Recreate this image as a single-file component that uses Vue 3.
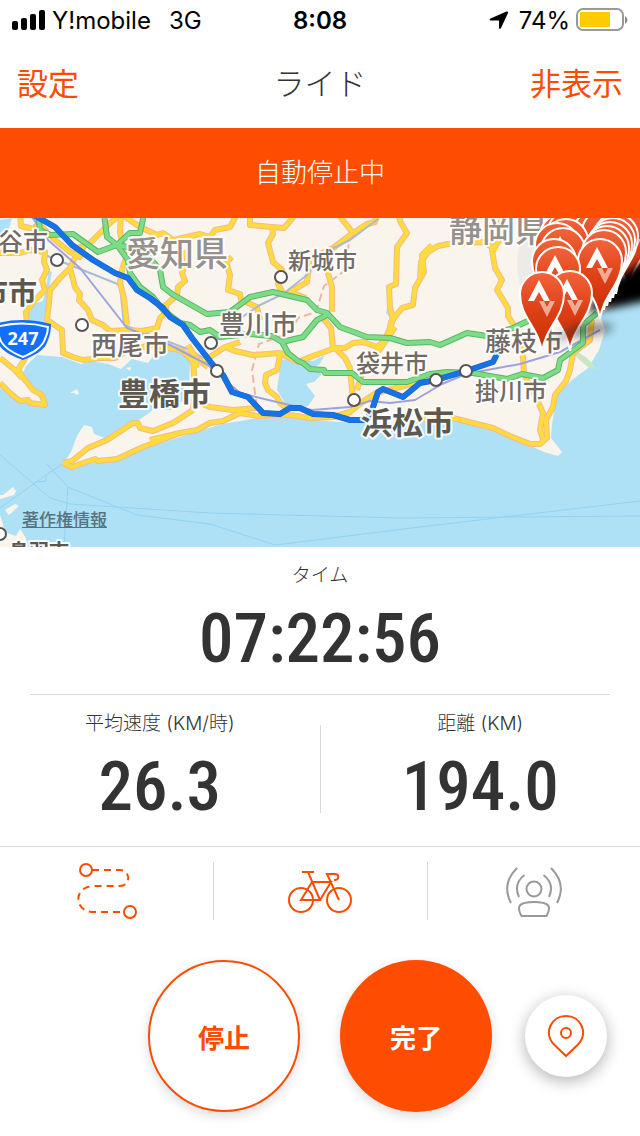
<script setup>
/**
 * ライド記録画面
 * 地図、走行データ、操作ボタンを表示
 */

// 高速道路（緑）
const highways = [
  '38,214 40,230 50,235 73,234 98,252 117,245 130,233 140,233 144,214',
  '104,214 107,237 117,245 128,260 130,273 140,287 153,297 163,310 180,323 190,325 200,332 210,330 220,337 250,334 272,336 282,342 288,353 298,361 303,363 310,369 324,370 325,373 352,373 363,382 407,382 430,374 447,372 473,373 507,379 522,374 543,378 558,370 560,360 583,343 583,325 597,313',
  '117,245 143,250 160,270 163,287 172,294 207,314 230,312 250,297 273,292 307,300 317,310 327,313 340,327 367,337 390,338 407,343 430,342 440,345 467,333 487,336 513,328 530,320 560,318',
  '327,315 317,320 303,337 282,342'
]

// 国道・県道（黄）
const roads = [
  '121,214 110,223 100,233 90,243 80,247 70,268 60,278 50,290 49,303 47,320 62,330 63,353 73,357 83,360 100,358 115,358 125,352 150,345 180,350 193,358 197,368',
  '121,214 120,232 122,243 126,258 122,270 120,283 124,298 127,325',
  '70,268 75,287 80,294 79,300 88,310 92,320 103,325 110,331 127,330 142,331 157,328 160,318 167,312 165,306 177,295 178,287 185,281 182,273 187,262 185,250',
  '0,253 20,253 30,250 45,252 44,262 47,270 42,280 45,290 35,300 26,312 27,325',
  '40,225 55,240 70,252 80,257 84,245',
  '121,214 140,227 157,235 163,233 173,240 200,234 210,237 215,230 230,227 237,214',
  '20,214 21,226 34,229 40,222',
  '27,355 18,370 25,380 33,390 42,395 45,405 30,403 28,400 20,401 10,393 0,383',
  '22,378 15,370 0,358',
  '185,353 193,362 195,385 193,410',
  '188,345 196,358 208,367',
  '240,342 225,347 210,357 195,363',
  '250,214 250,225 272,227 273,234 268,243 273,262 282,270 278,284 283,293',
  '272,227 284,228 296,214',
  '232,257 226,262 230,275 228,290 240,294 241,300 257,307 260,320',
  '338,214 353,233 333,248 310,259 307,282 290,292 306,298',
  '353,233 367,224 375,222 377,214',
  '327,270 332,287 332,312',
  '398,214 401,223 407,233 397,247 396,284 389,287 390,307 393,320 387,335 380,347',
  '432,245 422,255 424,272 415,288 413,305 402,308 391,322 388,338 377,347 363,342 353,343 345,348 333,348 331,328 322,317',
  '335,348 345,358 350,368 352,390 354,400',
  '225,347 235,351 253,355 280,353 298,362 310,357 335,348',
  '280,355 277,370 266,375 265,383 268,390 277,397 280,403 287,408',
  '395,327 380,349 364,367 357,390',
  '420,277 421,262 428,252 438,246 448,244 483,242 497,250',
  '501,214 500,240 492,250 495,268 502,280 497,290 508,308 508,316 517,330 523,357 524,374 530,386 537,400 543,413 540,430 543,440',
  '592,320 590,340 573,353 570,370 566,381 555,395 553,407 546,420 547,438 540,444 530,444 510,436 493,428 453,418 420,419',
  '150,440 180,433 197,430 210,423 223,421 240,413 257,416 290,415 310,418 333,417 350,412 365,400 376,393 400,387 425,380',
  '200,403 210,407 233,410 257,408',
  '63,463 72,461 88,448 107,440 133,423 138,423 140,428 153,431 173,423 193,410',
  '63,463 72,467 95,459 98,461 117,459 143,447 180,433'
]

const coastlines = [
  // 本州
  'M0 218H640V285L600 315L605 330L599 350L588 368L572 380L557 394L552 424L551 438L562 452L558 456L544 452L529 445L492 430L452 419L390 424L340 422L290 418L252 419L222 424L196 432L145 448L118 461L96 462L72 468L63 464L71 452L77 436L84 425L92 427L94 434L105 438L132 424L145 416L153 410L171 410L178 404L189 397L190 358L181 350L158 350L148 363L132 359L121 369L108 364L92 361L81 364L62 357L37 355L26 366L22 375L35 391L43 404L28 402L0 388Z',
  // 渥美湾の島
  'M70 393l7-4 2 5-3 1-1-2Z',
  'M126 368l5-1-1 4Z',
  // 志摩の島
  'M3 495l10-8 3 4-2 4-14 4v-4Z',
  'M5 510l10-6 4 2-10 9Z',
  'M0 515l3 9 1 8 12 4 4-7 6 9 2 12H0Z'
]

const waters = [
  'M45 248l3 22 4 2-4 22 0 22-10 15-5-4-6-8 4-14 12-4 3-12 2-14Z',
  'M281 360l14-2 18 3 12-6-6 10-8 3 11 6-8 8-8 2 9 12-7 10-11 3-11-4-9-15Z',
  'M389 300l-3 13 5 6 2-9Z',
  'M0 220l12-2-4 14-8 3Z'
]

const ferryLines = [
  '0,455 50,498 70,504 210,513 400,518 640,516',
  '47,464 68,487 137,515 210,524 275,545 420,527 640,501',
  '0,508 35,483 62,464',
  '68,487 64,545',
  '35,482 46,481 46,474'
]

const rideRoute = '32,214 55,227 72,245 93,260 115,273 128,278 137,290 150,298 163,308 170,317 183,325 192,338 213,365 223,375 232,392 248,397 263,413 280,414 290,408 300,408 313,414 333,415 350,420 367,420 373,407 378,392 383,389 403,397 408,393 420,383 436,380 466,371 493,362 500,348'

const stations = [
  [57, 260], [82, 325], [281, 277], [211, 343],
  [217, 371], [354, 400], [436, 380], [466, 371], [0, 534]
]

const labels = [
  { text: '谷市', x: -2, y: 251, size: 25 },
  { text: '市市', x: -21, y: 304, size: 29, kind: 'city' },
  { text: '愛知県', x: 126, y: 266, size: 34, kind: 'pref' },
  { text: '静岡県', x: 449, y: 242, size: 33, kind: 'pref' },
  { text: '新城市', x: 288, y: 269, size: 23 },
  { text: '豊川市', x: 219, y: 334, size: 26 },
  { text: '西尾市', x: 91, y: 355, size: 26 },
  { text: '豊橋市', x: 118, y: 405, size: 31, kind: 'city' },
  { text: '袋井市', x: 356, y: 372, size: 24 },
  { text: '藤枝市', x: 485, y: 351, size: 26 },
  { text: '掛川市', x: 475, y: 400, size: 24 },
  { text: '浜松市', x: 361, y: 434, size: 31, kind: 'city' },
  { text: '鳥羽市', x: 9, y: 559, size: 20, kind: 'city' }
]

// 影より奥にあるピン
const backPins = [[655, 226], [638, 232], [628, 232]]

// 奥から手前の順に描画
const pins = [
  [562, 236], [570, 232], [580, 235], [594, 234], [604, 232],
  [566, 241], [557, 245], [563, 250], [616, 236], [613, 240], [610, 244],
  [607, 248], [604, 252], [554, 261], [600, 261], [558, 269], [570, 293], [542, 294]
]
</script>

<template>
  <div class="screen">
    <div class="status-bar">
      <div class="carrier">
        <svg class="signal" width="34" height="20" viewBox="0 0 34 20">
          <rect x="0" y="11" width="6" height="9" rx="2" />
          <rect x="9" y="8" width="6" height="12" rx="2" />
          <rect x="18" y="4" width="6" height="16" rx="2" />
          <rect x="27" y="0" width="6" height="20" rx="2" />
        </svg>
        <span>Y!mobile</span>
        <span class="network">3G</span>
      </div>
      <span class="clock">8:08</span>
      <div class="power">
        <svg width="20" height="20" viewBox="0 0 20 20">
          <path d="M1.500 8.500L17.500 1.500Q19.500 1 19 3L12 18Q10.500 20 10 17.500V10.500H2Q-0.500 10 1.500 8.500Z" />
        </svg>
        <span class="percent">74%</span>
        <svg width="52" height="24" viewBox="0 0 52 24">
          <rect x="1" y="1" width="46" height="21" rx="6" fill="none" stroke="#999" stroke-width="2" />
          <rect x="4" y="4" width="30" height="15" fill="#fc0" />
          <path d="M49 8q5 4 0 8Z" fill="#888" />
        </svg>
      </div>
    </div>

    <header class="nav">
      <button type="button" class="nav-btn">設定</button>
      <h1>ライド</h1>
      <button type="button" class="nav-btn right">非表示</button>
    </header>

    <div class="banner">自動停止中</div>

    <div class="map">
      <svg class="map-canvas" viewBox="0 218 640 329">
        <defs>
          <linearGradient id="pinFill" x1="0" y1="0" x2="0" y2="1">
            <stop offset="0" stop-color="#f2643c" />
            <stop offset="0.5" stop-color="#dc3f14" />
            <stop offset="1" stop-color="#c92d08" />
          </linearGradient>
          <filter id="shadowBlur" x="-30%" y="-60%" width="160%" height="220%">
            <feGaussianBlur stdDeviation="4" />
          </filter>
          <g id="pin">
            <path class="pin-body" d="M0 58C-3 34-22 23-22 0A22 22 0 0 1 22 0C22 23 3 34 0 58Z" />
            <path fill="#fff" d="M-14 7L-3-14L8 7H2L-3-2L-8 7Z" />
            <path fill="#fff" opacity="0.55" d="M-3 7H2L5 13L8 7H13L5 23Z" />
          </g>
        </defs>

        <rect x="0" y="218" width="640" height="329" fill="#aee1f6" />
        <path v-for="d in coastlines" :key="d" :d="d" fill="#f9f5ed" />
        <path v-for="d in waters" :key="d" :d="d" fill="#aee1f6" />
        <ellipse cx="545" cy="265" rx="28" ry="44" fill="#ecebe6" />
        <path d="M575 350l12 8 11 12-10-3-14-12Z" fill="#c9e6c4" />

        <polyline v-for="p in ferryLines" :key="p" :points="p" class="ferry" />
        <polyline class="rail-thin" points="34,224 45,255 75,267 120,285 124,325 190,350 203,358" />
        <polyline class="rail-new" points="375,222 350,238 343,272 324,286 316,312 298,318 290,333 259,344 252,370 257,408" />
        <polyline v-for="p in roads" :key="'c' + p" :points="p" class="road-case" />
        <polyline v-for="p in roads" :key="p" :points="p" class="road" />
        <polyline class="rail-thin" points="378,219 350,240 325,252 307,275 283,294 260,305 235,322 212,345" />
        <polyline class="rail" points="30,214 48,240 80,268 127,328 170,345 208,365 240,393 285,404 312,410 350,407 370,401 390,403 415,400 442,384 466,374 520,364 560,352 600,330" />
        <polyline v-for="p in highways" :key="'c' + p" :points="p" class="highway-case" />
        <polyline v-for="p in highways" :key="p" :points="p" class="highway" />
        <polyline :points="rideRoute" class="route-case" />
        <polyline :points="rideRoute" class="route" />

        <circle v-for="[x, y] in stations" :key="x + '-' + y" :cx="x" :cy="y" r="6" class="station" />

        <text
          v-for="label in labels"
          :key="label.text"
          :x="label.x"
          :y="label.y"
          :font-size="label.size"
          class="label"
          :class="label.kind"
        >{{ label.text }}</text>

        <path d="M-6 324Q22 316 51 324Q51 333 48 340C45 351 33 356 23 360C12 356 0 351-3 340Z" fill="#136fff" />
        <path d="M-4 327Q22 320 48 327Q48 333 45 339C42 348 32 353 23 357C13 353 3 348 0 339Z" fill="none" stroke="#fff" stroke-width="2" />
        <text class="shield" x="23" y="345">247</text>

        <use v-for="[x, y] in backPins" :key="x + '-' + y" href="#pin" :x="x" :y="y" />
        <path d="M585 312L612 280L650 258V300L612 308Z" fill="#000" filter="url(#shadowBlur)" />
        <use v-for="[x, y] in pins" :key="x + '-' + y" href="#pin" :x="x" :y="y" />
        <path
          d="M550 342L575 325Q616 318 613 329Q606 336 570 337Z"
          fill="#222"
          opacity="0.45"
          filter="url(#shadowBlur)"
        />
      </svg>
      <a class="legal" href="#">著作権情報</a>
    </div>

    <dl class="metric time">
      <dt>タイム</dt>
      <dd>07:22:56</dd>
    </dl>

    <div class="metric-row">
      <dl class="metric">
        <dt>平均速度 (KM/時)</dt>
        <dd>26.3</dd>
      </dl>
      <div class="divider"></div>
      <dl class="metric">
        <dt>距離 (KM)</dt>
        <dd>194.0</dd>
      </dl>
    </div>

    <div class="tools">
      <button type="button" class="tool" aria-label="ルート">
        <svg width="62" height="58" viewBox="76 862 62 58">
          <circle cx="86" cy="870" r="6" />
          <path d="M92 870H120C131 870 131 886 120 886H94C73 886 73 912 94 912H124" stroke-dasharray="7 5" />
          <circle cx="130" cy="912" r="6" />
        </svg>
      </button>
      <button type="button" class="tool" aria-label="自転車">
        <svg width="66" height="58" viewBox="287 862 66 58">
          <circle cx="301" cy="900" r="12" />
          <circle cx="339" cy="900" r="12" />
          <path d="M302 872H314M308 872L320 900H301L312 882H331L320 900M339 900L327 874H335C339 874 340 880 334 880" />
        </svg>
      </button>
      <button type="button" class="tool off" aria-label="ビーコン">
        <svg width="58" height="58" viewBox="505 862 58 58">
          <circle cx="534" cy="889" r="7.500" />
          <path d="M521.500 916C516 906 519 902 534 902S552 906 546.500 916ZM517 868Q501 884 511 903M524.500 875Q513 884 519 897M551 868Q567 884 557 903M543.500 875Q555 884 549 897" />
        </svg>
      </button>
    </div>

    <div class="actions">
      <div class="main-actions">
        <button type="button" class="round stop">停止</button>
        <button type="button" class="round finish">完了</button>
      </div>
      <button type="button" class="locate" aria-label="現在地">
        <svg width="38" height="44" viewBox="0 0 38 44">
          <path d="M19 42L7.500 31C-4 19 4 2 19 2S42 19 30.500 31Z" />
          <circle cx="19" cy="19" r="5" />
        </svg>
      </button>
    </div>
  </div>
</template>

<style>
body {
  background: #fff;
}
</style>

<style scoped>
.screen {
  --orange: #fc4c02;
  font-family: Inter, "Noto Sans CJK JP", sans-serif;
  color: #333;
  overflow: hidden;
}

button {
  padding: 0;
  border: none;
  background: none;
  font-family: inherit;
  cursor: pointer;
}

.status-bar {
  display: grid;
  grid-template-columns: 1fr auto 1fr;
  align-items: center;
  height: 40px;
  padding: 0 12px;
  font-size: 24px;
  color: #000;
}

.carrier,
.power {
  display: flex;
  align-items: center;
}

.carrier {
  gap: 6px;
}

.network {
  margin-left: 12px;
}

.clock {
  font-weight: 600;
}

.power {
  justify-content: flex-end;
}

.percent {
  margin: 0 6px 0 10px;
}

.nav {
  display: grid;
  grid-template-columns: 1fr auto 1fr;
  align-items: center;
  height: 88px;
  padding: 0 17px;
}

.nav h1,
.nav-btn {
  margin: 0;
  font-size: 31px;
  line-height: 40px;
  font-weight: 300;
}

.nav-btn {
  justify-self: start;
  color: var(--orange);
  font-weight: 400;
}

.nav-btn.right {
  justify-self: end;
}

.banner {
  background: #ff4d00;
  color: #fff;
  font-size: 26px;
  font-weight: 300;
  line-height: 90px;
  text-align: center;
}

.map {
  position: relative;
}

.map-canvas {
  display: block;
  width: 100%;
}

.map-canvas polyline {
  fill: none;
  stroke-linejoin: round;
}

.road-case {
  stroke: #f5b98f;
  stroke-width: 6;
}

.road {
  stroke: #ffdc3c;
  stroke-width: 4;
}

.highway-case {
  stroke: #58b56c;
  stroke-width: 6;
}

.highway {
  stroke: #7fdc86;
  stroke-width: 4;
}

.route-case {
  stroke: #2c5fae;
  stroke-width: 6;
}

.route {
  stroke: #1473e6;
  stroke-width: 5;
}

.ferry {
  stroke: #93d2f3;
  stroke-width: 1;
}

.rail {
  stroke: #9da2df;
  stroke-width: 2;
}

.rail-thin {
  stroke: #a9bcd2;
  stroke-width: 2;
}

.rail-new {
  stroke: #efb5ab;
  stroke-width: 2;
  stroke-dasharray: 8 4;
}

.station {
  fill: #fff;
  stroke: #555;
  stroke-width: 2;
}

.label {
  font-family: "Noto Sans CJK JP", sans-serif;
  font-weight: 500;
  fill: #706b66;
  stroke: rgba(255, 255, 255, 0.9);
  stroke-width: 4;
  stroke-linejoin: round;
  paint-order: stroke;
}

.label.city {
  font-weight: 700;
  fill: #5c5850;
}

.label.pref {
  fill: #96918b;
}

.shield {
  font-family: "Noto Sans", sans-serif;
  font-size: 18px;
  font-weight: 700;
  fill: #fff;
  text-anchor: middle;
}

.pin-body {
  fill: url(#pinFill);
  stroke: #fff;
  stroke-width: 2;
}

.legal {
  position: absolute;
  left: 22px;
  bottom: 15px;
  font-size: 17px;
  line-height: 24px;
  font-weight: 500;
  color: #58727e;
}

.metric {
  margin: 0;
  text-align: center;
}

.metric dt {
  font-size: 19px;
  line-height: 26px;
  font-weight: 300;
}

.metric dd {
  margin: 0;
  font-family: "Roboto Condensed", Roboto, sans-serif;
  font-size: 69px;
  line-height: 80px;
  font-weight: 500;
}

.time {
  margin: 0 30px;
  padding: 16px 0 15px;
  border-bottom: 1px solid #d8d8d8;
}

.time dd,
.metric-row dd {
  margin-top: 10px;
}

.metric-row {
  display: grid;
  grid-template-columns: 1fr 1px 1fr;
  padding: 16px 0 19px;
  border-bottom: 1px solid #d8d8d8;
}

.divider {
  margin: 14px 0;
  background: #d8d8d8;
}

.tools {
  display: grid;
  grid-template-columns: repeat(3, 1fr);
  padding: 15px 0;
}

.tool {
  display: flex;
  align-items: center;
  justify-content: center;
  height: 58px;
}

.tool + .tool {
  border-left: 1px solid #d8d8d8;
}

.tool svg,
.locate svg {
  fill: none;
  stroke: var(--orange);
  stroke-width: 2;
}

.tool.off svg {
  stroke: #999;
}

.actions {
  display: grid;
  grid-template-columns: 1fr auto 1fr;
  align-items: center;
  padding: 25px 33px 24px;
}

.main-actions {
  grid-column: 2;
  display: flex;
  gap: 40px;
}

.round {
  width: 152px;
  height: 152px;
  border-radius: 50%;
  font-size: 26px;
  font-weight: 700;
  box-shadow: 0 4px 12px rgba(0, 0, 0, 0.14);
}

.stop {
  border: 2px solid var(--orange);
  background: #fff;
  color: var(--orange);
}

.finish {
  background: #ff4d00;
  color: #fff;
}

.locate {
  justify-self: end;
  display: flex;
  align-items: center;
  justify-content: center;
  width: 82px;
  height: 82px;
  border-radius: 50%;
  background: #fff;
  box-shadow: 0 4px 16px rgba(0, 0, 0, 0.3);
}
</style>
